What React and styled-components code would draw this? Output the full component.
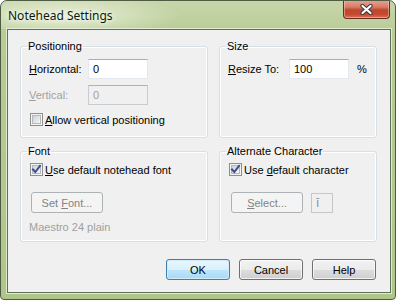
import styled, { createGlobalStyle } from "styled-components";

const GlobalStyle = createGlobalStyle`
html, body {
margin: 0;
padding: 0;
background: #ffffff;
}
body {
font-family: 'Liberation Sans', Arial, sans-serif;
font-size: 11px;
color: #000000;
}
`

function Checkbox({ checked }) {
    return (
        <CheckOuter>
            <CheckInner />
            {checked && (
                <CheckMark width="11" height="11" viewBox="0 0 11 11">
                    <path d="M2 5.5 L4.3 8 L9 2" fill="none" stroke="#3b4f8f" strokeWidth="2" strokeLinecap="square" />
                </CheckMark>
            )}
        </CheckOuter>
    );
}

function Group({ title, children }) {
    return (
        <GroupBox>
            <Legend>{title}</Legend>
            {children}
        </GroupBox>
    );
}

export default function App() {
    return (
        <>
            <GlobalStyle />
            <Window>
                <TitleBar>
                    <Title>Notehead Settings</Title>
                    <CloseButton>
                        <svg width="13" height="11" viewBox="0 0 13 11">
                            <path d="M2.5 2 L10.5 9 M10.5 2 L2.5 9" stroke="#3a3a44" strokeWidth="4.2" strokeLinecap="round" />
                            <path d="M2.5 2 L10.5 9 M10.5 2 L2.5 9" stroke="#ffffff" strokeWidth="2.2" strokeLinecap="round" />
                        </svg>
                    </CloseButton>
                </TitleBar>
                <Client>
                    <Groups>
                        <Group title="Positioning">
                            <FieldRow $top={6}>
                                <FieldLabel $width={59}><u>H</u>orizontal:</FieldLabel>
                                <TextBox>0</TextBox>
                            </FieldRow>
                            <FieldRow $top={6}>
                                <FieldLabel $width={59} $disabled><u>V</u>ertical:</FieldLabel>
                                <TextBox $disabled>0</TextBox>
                            </FieldRow>
                            <CheckRow $top={8}>
                                <Checkbox />
                                <span><u>A</u>llow vertical positioning</span>
                            </CheckRow>
                        </Group>
                        <Group title="Size">
                            <FieldRow $top={6}>
                                <FieldLabel $width={61}><u>R</u>esize To:</FieldLabel>
                                <TextBox>100</TextBox>
                                <Unit>%</Unit>
                            </FieldRow>
                        </Group>
                        <Group title="Font">
                            <CheckRow $top={5}>
                                <Checkbox checked />
                                <span><u>U</u>se default notehead font</span>
                            </CheckRow>
                            <ActionRow $left={2}>
                                <PushButton $disabled><span>Set <u>F</u>ont...</span></PushButton>
                            </ActionRow>
                            <Note>Maestro 24 plain</Note>
                        </Group>
                        <Group title="Alternate Character">
                            <CheckRow $top={5}>
                                <Checkbox checked />
                                <span>Use <u>d</u>efault character</span>
                            </CheckRow>
                            <ActionRow $left={3}>
                                <PushButton $disabled><span><u>S</u>elect...</span></PushButton>
                                <CharBox>ī</CharBox>
                            </ActionRow>
                        </Group>
                    </Groups>
                    <ButtonRow>
                        <DialogButton $default>OK</DialogButton>
                        <DialogButton>Cancel</DialogButton>
                        <DialogButton>Help</DialogButton>
                    </ButtonRow>
                </Client>
            </Window>
        </>
    );
}

const Window = styled.div`
width: 396px;
height: 300px;
box-sizing: border-box;
border: 1px solid #4e5c44;
border-radius: 7px 7px 4px 4px;
background: linear-gradient(180deg, #c7d6ab 0%, #b7cb93 12%, #afc68a 100%);
padding: 0 4px 6px 6px;
display: flex;
flex-direction: column;
overflow: hidden;
`

const TitleBar = styled.div`
height: 28px;
display: flex;
align-items: flex-start;
justify-content: space-between;
background: radial-gradient(ellipse 120px 22px at 60px 15px, rgba(240, 245, 228, 0.85), rgba(240, 245, 228, 0) 100%);
margin: 0 -4px 0 -6px;
padding: 0 5px 0 7px;
`

const Title = styled.div`
align-self: center;
font-family: 'Noto Sans', 'Open Sans', sans-serif;
font-size: 12px;
color: #0b1a10;
text-shadow: 0 0 6px #f4f8ec, 0 0 3px #f4f8ec;
`

const CloseButton = styled.div`
width: 47px;
height: 19px;
margin-top: -1px;
box-sizing: border-box;
border: 1px solid #6b2b22;
border-top: none;
border-radius: 0 0 4px 4px;
background: linear-gradient(180deg, #e8a597 0%, #d77a65 40%, #c0462c 55%, #c24a30 80%, #d9725a 100%);
box-shadow: inset 0 0 0 1px rgba(255, 220, 210, 0.45);
display: flex;
align-items: center;
justify-content: center;
`

const Client = styled.div`
flex: 1;
border: 1px solid #5f6f58;
background: #f0f0f0;
box-shadow: 0 0 0 1px rgba(235, 242, 222, 0.8);
padding: 10px 13px 0 12px;
display: flex;
flex-direction: column;
`

const Groups = styled.div`
display: grid;
grid-template-columns: 188px 158px;
grid-template-rows: 98px 97px;
column-gap: 11px;
row-gap: 7px;
`

const GroupBox = styled.fieldset`
margin: 0;
padding: 0 0 0 8px;
min-width: 0;
border: 1px solid #d5dfe5;
border-radius: 3px;
box-shadow: inset 0 0 0 1px #ffffff;
`

const Legend = styled.legend`
margin-left: -2px;
padding: 0 1px;
line-height: 13px;
`

const FieldRow = styled.div`
display: flex;
align-items: center;
margin-top: ${p => p.$top}px;
`

const FieldLabel = styled.span`
width: ${p => p.$width}px;
color: ${p => (p.$disabled ? "#a0a0a0" : "#000000")};
`

const TextBox = styled.div`
width: 60px;
height: 20px;
box-sizing: border-box;
border: 1px solid ${p => (p.$disabled ? "#c9cdd0" : "#e3e9ef")};
border-top-color: ${p => (p.$disabled ? "#adb2b5" : "#abadb3")};
background: ${p => (p.$disabled ? "#f0f0f0" : "#ffffff")};
color: ${p => (p.$disabled ? "#a0a0a0" : "#000000")};
padding: 0 0 0 4px;
line-height: 18px;
`

const Unit = styled.span`
margin-left: 8px;
`

const CheckRow = styled.div`
display: flex;
align-items: center;
gap: 2px;
margin-top: ${p => p.$top}px;
margin-left: 1px;
height: 13px;
`

const CheckOuter = styled.span`
position: relative;
width: 13px;
height: 13px;
box-sizing: border-box;
border: 1px solid #8e8f8f;
background: #f4f4f4;
padding: 1px;
flex-shrink: 0;
`

const CheckInner = styled.span`
display: block;
width: 9px;
height: 9px;
border: 1px solid #b4b9bf;
box-sizing: border-box;
background: linear-gradient(135deg, #cfd2d6 0%, #e4e5e7 55%, #f7f7f7 100%);
`

const CheckMark = styled.svg`
position: absolute;
left: 0;
top: 0;
`

const ActionRow = styled.div`
display: flex;
align-items: center;
gap: 8px;
margin-top: 16px;
margin-left: ${p => p.$left}px;
`

const PushButton = styled.div`
width: 72px;
height: 21px;
box-sizing: border-box;
border: 1px solid ${p => (p.$disabled ? "#adb2b5" : "#707070")};
border-radius: 3px;
background: ${p => (p.$disabled ? "#f4f4f4" : "linear-gradient(180deg, #f2f2f2 0%, #ebebeb 50%, #dddddd 51%, #cfcfcf 100%)")};
color: ${p => (p.$disabled ? "#838383" : "#000000")};
display: flex;
align-items: center;
justify-content: center;
`

const CharBox = styled.div`
width: 22px;
height: 20px;
box-sizing: border-box;
border: 1px solid #c3c7ca;
background: #f0f0f0;
color: #8a8aa8;
padding-left: 4px;
line-height: 18px;
font-size: 12px;
`

const Note = styled.div`
margin-top: 8px;
color: #a0a0a0;
line-height: 13px;
`

const ButtonRow = styled.div`
display: flex;
justify-content: flex-end;
gap: 9px;
margin-top: 17px;
padding-right: 1px;
`

const DialogButton = styled.div`
width: 64px;
height: 21px;
box-sizing: border-box;
border: 1px solid ${p => (p.$default ? "#3c7fb1" : "#707070")};
border-radius: 3px;
background: ${p => (p.$default
        ? "linear-gradient(180deg, #eaf6fd 0%, #d9f0fc 50%, #bee6fd 51%, #a7d9f5 100%)"
        : "linear-gradient(180deg, #f2f2f2 0%, #ebebeb 50%, #dddddd 51%, #cfcfcf 100%)")};
box-shadow: inset 0 0 0 1px ${p => (p.$default ? "#d2ecfa" : "rgba(255, 255, 255, 0.7)")};
display: flex;
align-items: center;
justify-content: center;
`
